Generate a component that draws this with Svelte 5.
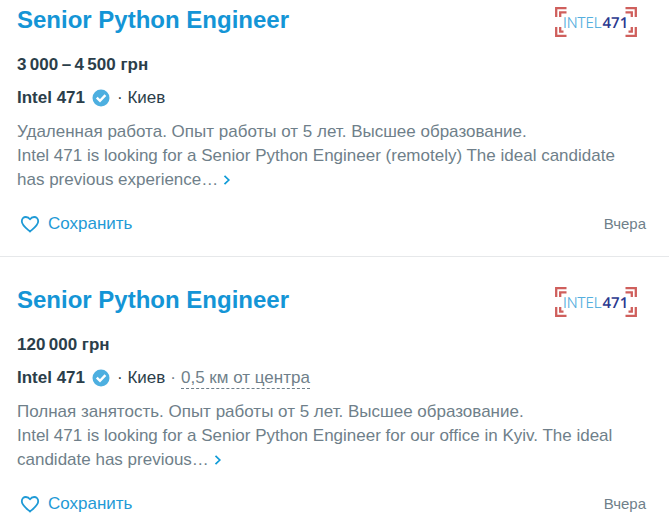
<script lang="ts">
	type Job = {
		id: number;
		title: string;
		salary: string;
		company: string;
		city: string;
		distance?: string;
		terms: string;
		summary: string;
		date: string;
	};

	const jobs: Job[] = [
		{
			id: 1,
			title: 'Senior Python Engineer',
			salary: '3\u2009000\u2009–\u20094\u2009500 грн',
			company: 'Intel 471',
			city: 'Киев',
			terms: 'Удаленная работа. Опыт работы от 5 лет. Высшее образование.',
			summary:
				'Intel 471 is looking for a Senior Python Engineer (remotely) The ideal candidate has previous experience…',
			date: 'Вчера'
		},
		{
			id: 2,
			title: 'Senior Python Engineer',
			salary: '120\u2009000 грн',
			company: 'Intel 471',
			city: 'Киев',
			distance: '0,5 км от центра',
			terms: 'Полная занятость. Опыт работы от 5 лет. Высшее образование.',
			summary:
				'Intel 471 is looking for a Senior Python Engineer for our office in Kyiv. The ideal candidate has previous…',
			date: 'Вчера'
		}
	];

	let saved: number[] = $state([]);

	function toggle(id: number) {
		saved = saved.includes(id) ? saved.filter((s) => s !== id) : [...saved, id];
	}
</script>

<main>
	{#each jobs as job (job.id)}
		<article>
			<header>
				<h2><a href="#job-{job.id}">{job.title}</a></h2>
				<svg class="logo" width="84" height="32" viewBox="0 0 84 32" role="img" aria-label={job.company}>
					<!-- corner brackets -->
					<g fill="none" stroke="#cf5f5c" stroke-width="2.3">
						<path d="M2.2 11V2.2H12.5M6.2 11V6.4H12.5" />
						<path d="M71.5 2.2H81.8V11M71.5 6.4H77.8V11" />
						<path d="M2.2 21V29.8H12.5M6.2 21V25.6H9.5" />
						<path d="M71.5 29.8H81.8V21M74.5 25.6H77.8V21" />
					</g>
					<text class="logo-name" x="9" y="21.5">INTEL</text>
					<text class="logo-num" x="48.5" y="21.5">471</text>
				</svg>
			</header>

			<p class="salary">{job.salary}</p>

			<p class="company">
				<b>{job.company}</b>
				<svg class="check" width="18" height="18" viewBox="0 0 18 18" aria-hidden="true">
					<circle cx="9" cy="9" r="8.5" fill="#4dafe0" />
					<path d="M4.8 8.6L8 11.8L13.4 6.2" fill="none" stroke="#fff" stroke-width="2.4" />
				</svg>
				<span>· {job.city}</span>
				{#if job.distance}
					<span class="muted">·</span>
					<span class="distance">{job.distance}</span>
				{/if}
			</p>

			<p class="summary">
				{job.terms}<br />
				{job.summary}
				<a href="#job-{job.id}" aria-label={job.title}
					><svg class="more" width="8" height="12" viewBox="0 0 8 12" aria-hidden="true">
						<path d="M1.5 1.8L5.8 6L1.5 10.2" fill="none" stroke="#0f9bd7" stroke-width="1.7" />
					</svg></a
				>
			</p>

			<footer>
				<button type="button" aria-pressed={saved.includes(job.id)} onclick={() => toggle(job.id)}>
					<svg width="20" height="18" viewBox="0 0 20 18" aria-hidden="true">
						<path
							d="M10 16.6C7.5 14.3 1.8 10.5 1.8 6.3C1.8 3.8 3.6 2 5.9 2C7.6 2 9.1 2.9 10 4.4C10.9 2.9 12.4 2 14.1 2C16.4 2 18.2 3.8 18.2 6.3C18.2 10.5 12.5 14.3 10 16.6Z"
							fill={saved.includes(job.id) ? 'currentColor' : 'none'}
							stroke="currentColor"
							stroke-width="1.8"
							stroke-linejoin="round"
						/>
					</svg>
					Сохранить
				</button>
				<time>{job.date}</time>
			</footer>
		</article>
	{/each}
</main>

<style>
	:global(body) {
		background: #fff;
	}

	main {
		font-family: 'Liberation Sans', Arial, sans-serif;
		font-size: 17px;
		line-height: 24px;
		color: #2b3e4a;
	}

	article {
		padding: 29px 23px 20px 17px;
	}

	article:first-child {
		padding-top: 6px;
	}

	article + article {
		border-top: 1px solid #e6e8ea;
	}

	header {
		display: flex;
		justify-content: space-between;
		align-items: flex-start;
		height: 28px;
	}

	h2,
	p {
		margin: 0;
	}

	h2 {
		font-size: 24px;
		line-height: 28px;
	}

	a {
		color: #1495d6;
		text-decoration: none;
	}

	.logo {
		flex: none;
		margin-right: 8px;
	}

	.logo-name,
	.logo-num {
		font-family: 'Open Sans', sans-serif;
		font-size: 15px;
		text-rendering: geometricPrecision;
	}

	.logo-name {
		font-weight: 300;
		fill: #45a9dc;
		stroke: #45a9dc;
		stroke-width: 0.2;
	}

	.logo-num {
		font-weight: 600;
		fill: #2b3990;
	}

	.salary {
		margin-top: 19px;
		font-weight: 700;
	}

	.company {
		display: flex;
		align-items: center;
		gap: 5px;
		margin-top: 9px;
	}

	.check {
		margin: 0 2px;
	}

	.muted,
	.distance {
		color: #6f7f8a;
	}

	.distance {
		line-height: 20px;
		border-bottom: 1px dashed #6f7f8a;
	}

	.summary {
		max-width: 608px;
		margin-top: 10px;
		color: #6f7f8a;
	}

	.more {
		vertical-align: -1px;
	}

	footer {
		display: flex;
		justify-content: space-between;
		align-items: center;
		margin-top: 20px;
	}

	button {
		display: flex;
		align-items: center;
		gap: 8px;
		padding: 0 3px;
		border: 0;
		background: none;
		font: inherit;
		color: #1f9ad6;
		cursor: pointer;
	}

	time {
		font-size: 15px;
		color: #6f7f8a;
	}
</style>
